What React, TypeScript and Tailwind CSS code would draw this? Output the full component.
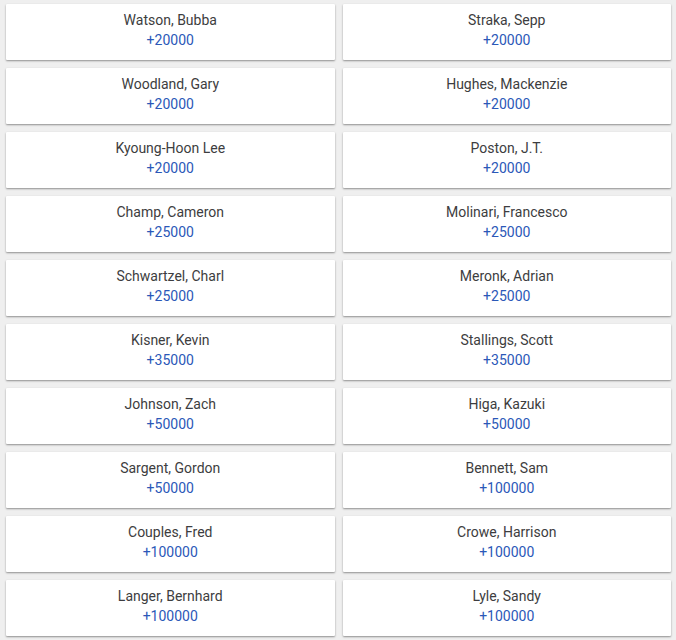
import React from 'react';

type Pick = { name: string; odds: string };

const picks: Pick[] = [
  { name: 'Watson, Bubba', odds: '+20000' },
  { name: 'Straka, Sepp', odds: '+20000' },
  { name: 'Woodland, Gary', odds: '+20000' },
  { name: 'Hughes, Mackenzie', odds: '+20000' },
  { name: 'Kyoung-Hoon Lee', odds: '+20000' },
  { name: 'Poston, J.T.', odds: '+20000' },
  { name: 'Champ, Cameron', odds: '+25000' },
  { name: 'Molinari, Francesco', odds: '+25000' },
  { name: 'Schwartzel, Charl', odds: '+25000' },
  { name: 'Meronk, Adrian', odds: '+25000' },
  { name: 'Kisner, Kevin', odds: '+35000' },
  { name: 'Stallings, Scott', odds: '+35000' },
  { name: 'Johnson, Zach', odds: '+50000' },
  { name: 'Higa, Kazuki', odds: '+50000' },
  { name: 'Sargent, Gordon', odds: '+50000' },
  { name: 'Bennett, Sam', odds: '+100000' },
  { name: 'Couples, Fred', odds: '+100000' },
  { name: 'Crowe, Harrison', odds: '+100000' },
  { name: 'Langer, Bernhard', odds: '+100000' },
  { name: 'Lyle, Sandy', odds: '+100000' },
];

const OddsCard: React.FC<Pick> = ({ name, odds }) => (
  <div className="h-[56px] cursor-pointer bg-white pt-[6px] text-center shadow-[0_1px_2px_rgba(0,0,0,0.4)] rounded-[1px]">
    <div className="text-[14px] leading-5 text-[#3d3d40]">{name}</div>
    <div className="text-[14px] leading-5 text-[#2b58b8]">{odds}</div>
  </div>
);

export default function App() {
  return (
    <div className="min-h-[640px] bg-[#efefef] pl-[6px] pr-[5px] pt-[4px] font-['Roboto','Liberation_Sans',sans-serif]">
      <div className="grid grid-cols-2 gap-x-2 gap-y-2">
        {picks.map((p) => (
          <OddsCard key={p.name} name={p.name} odds={p.odds} />
        ))}
      </div>
    </div>
  );
}
